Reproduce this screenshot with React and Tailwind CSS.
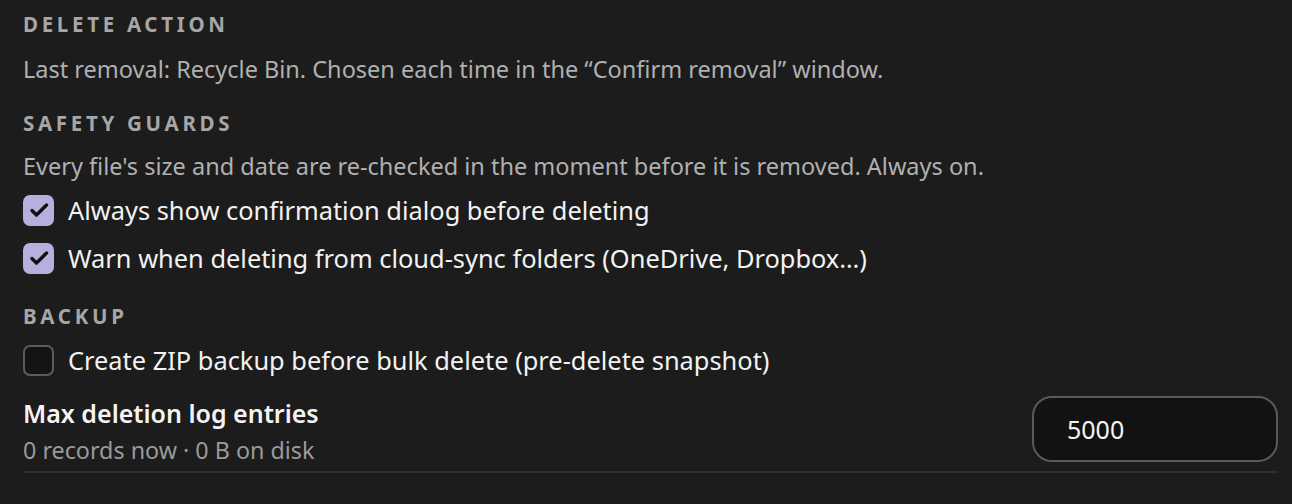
const font = { fontFamily: '"Noto Sans", "Open Sans", sans-serif' }

function Heading({ children, className = '' }) {
  return (
    <div className={`text-[20.5px] leading-[28px] font-bold tracking-[0.18em] uppercase text-[#a6a6a6] ${className}`}>
      {children}
    </div>
  )
}

function Check({ checked, label, className = '' }) {
  return (
    <label className={`flex items-center gap-[14px] h-[32px] ${className}`}>
      {checked ? (
        <span className="w-[31px] h-[31px] rounded-[7px] bg-[#b8afdc] flex items-center justify-center shrink-0">
          <svg width="24" height="24" viewBox="0 0 24 24" fill="none" stroke="#111111" strokeWidth="3.4" strokeLinecap="round" strokeLinejoin="round">
            <path d="M5 12.5l4.5 4.5L19.5 7" />
          </svg>
        </span>
      ) : (
        <span className="w-[31px] h-[31px] rounded-[7px] bg-[#141414] border-2 border-[#5c5c5c] shrink-0" />
      )}
      <span className="text-[25.4px] text-[#f2f2f2] leading-[32px]">{label}</span>
    </label>
  )
}

export default function App() {
  return (
    <div className="min-h-screen bg-[#1c1c1c] pl-[23px] pr-[14px] pt-[10px]" style={font}>
      <Heading>Delete action</Heading>
      <p className="mt-[17px] text-[23.5px] leading-[28px] text-[#b0b0b0]">
        Last removal: Recycle Bin. Chosen each time in the “Confirm removal” window.
      </p>

      <Heading className="mt-[26px]">Safety guards</Heading>
      <p className="mt-[15px] text-[23.5px] leading-[28px] text-[#b0b0b0]">
        Every file's size and date are re-checked in the moment before it is removed. Always on.
      </p>
      <Check className="mt-[14px]" checked label="Always show confirmation dialog before deleting" />
      <Check className="mt-[16px]" checked label="Warn when deleting from cloud-sync folders (OneDrive, Dropbox…)" />

      <Heading className="mt-[28px]">Backup</Heading>
      <Check className="mt-[14px]" label="Create ZIP backup before bulk delete (pre-delete snapshot)" />

      <div className="mt-[20px] flex items-center justify-between pb-[7px] border-b-2 border-[#303030]">
        <div className="flex flex-col">
          <span className="text-[25px] leading-[32px] font-semibold text-[#f4f4f4]">Max deletion log entries</span>
          <span className="mt-[8px] text-[23.3px] leading-[26px] text-[#9a9a9a]">0 records now · 0 B on disk</span>
        </div>
        <input
          defaultValue="5000"
          className="mb-[2px] w-[246px] h-[66px] rounded-[20px] bg-[#121212] border-2 border-[#5a5a5a] pl-[33px] text-[25px] text-[#f4f4f4] outline-none"
          style={font}
        />
      </div>
    </div>
  )
}
